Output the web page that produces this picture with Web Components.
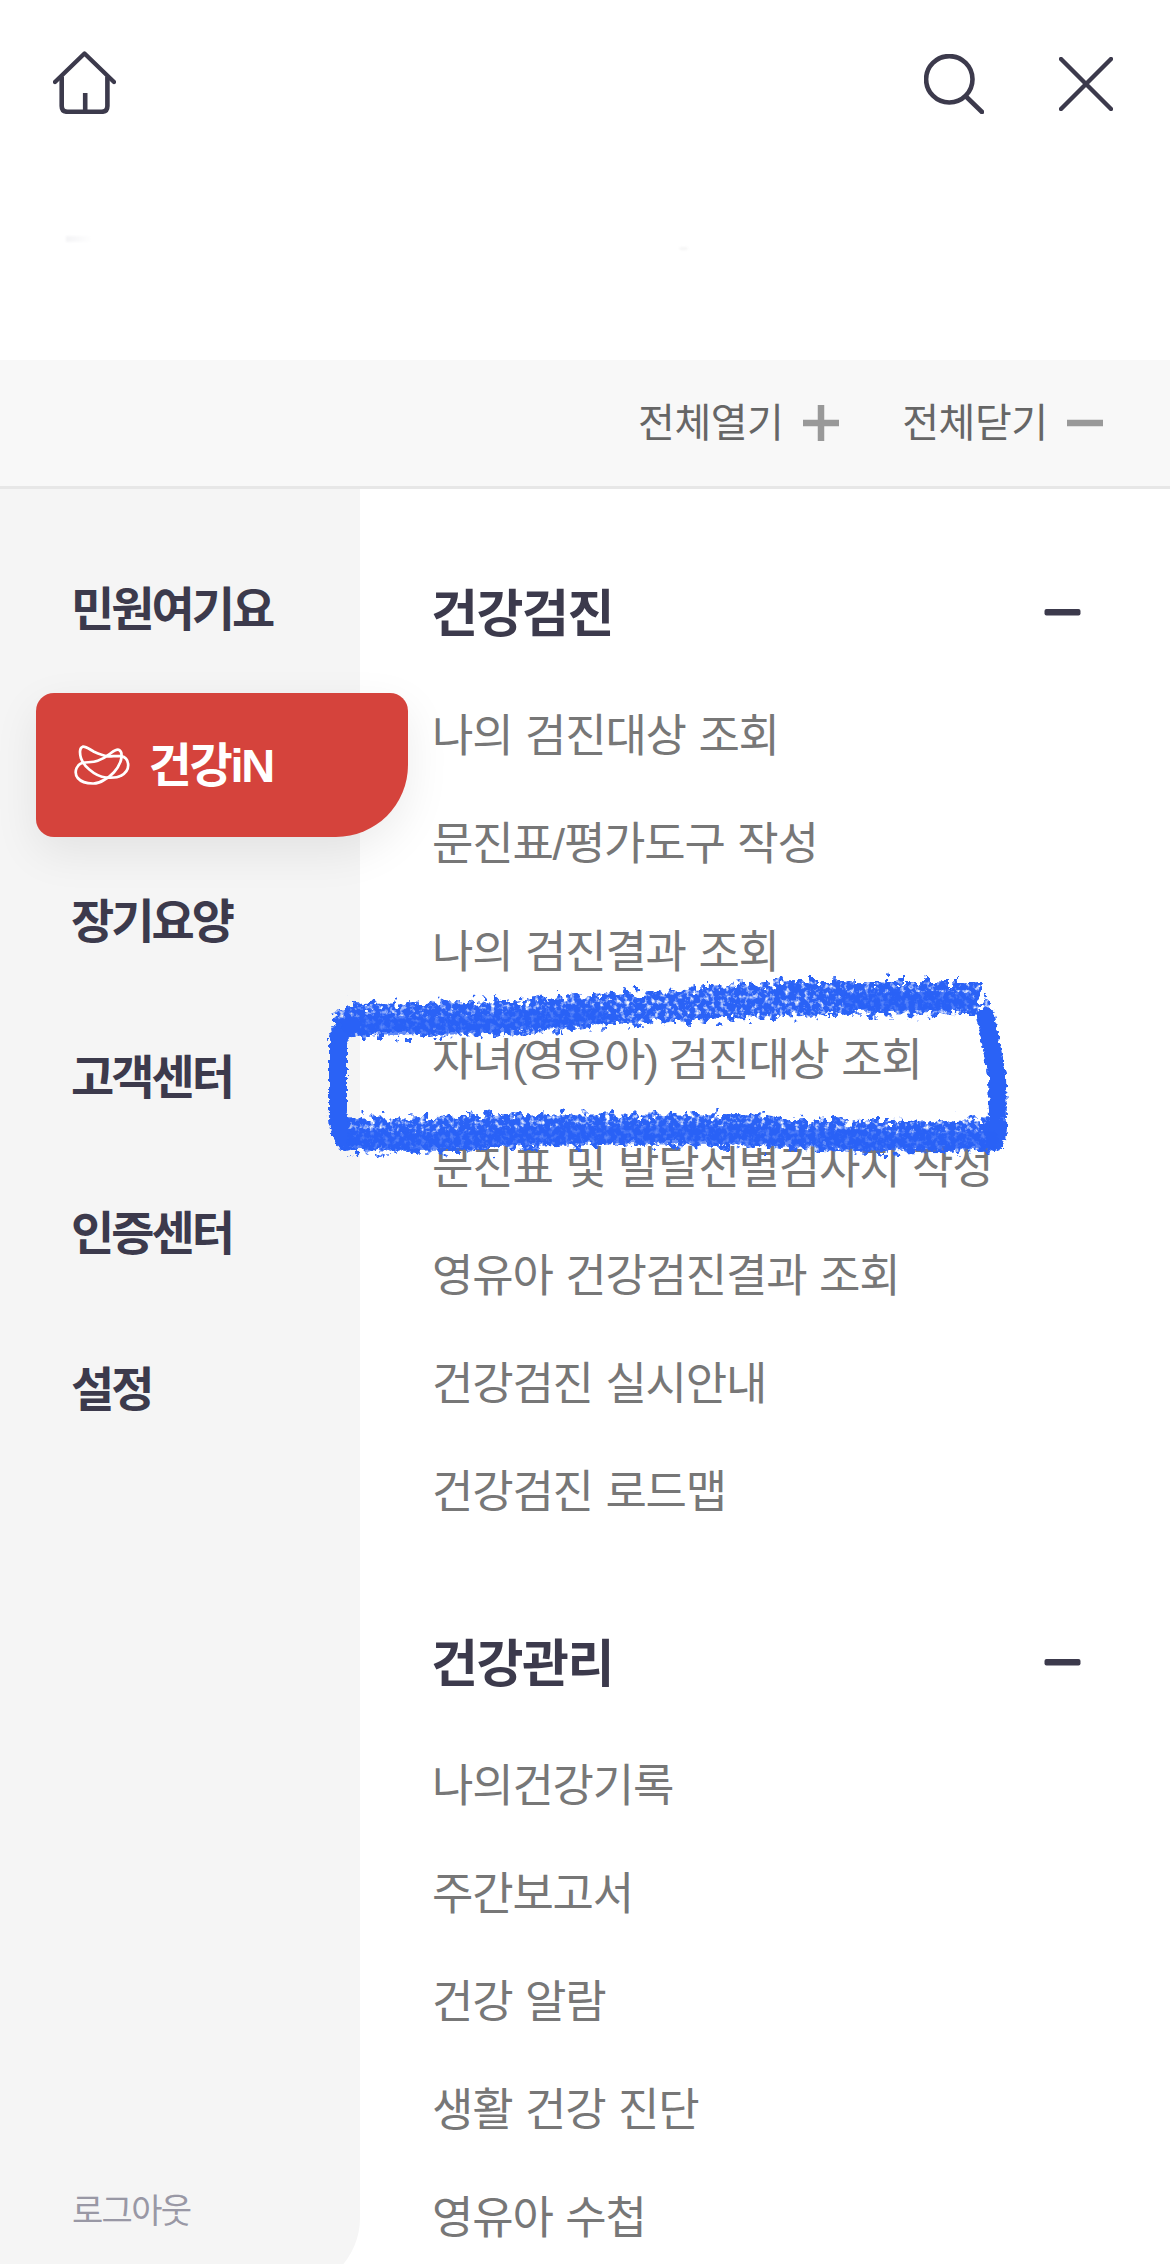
<!DOCTYPE html>
<html lang="ko">
<head>
<meta charset="utf-8">
<title>전체메뉴</title>
<style>
html,body{margin:0;padding:0;background:#fff}
body{width:1170px;height:2264px;overflow:hidden;font-family:"Liberation Sans","Noto Sans CJK KR",sans-serif;color:#3c3a4c}
</style>
</head>
<body>
<menu-app></menu-app>
<script>
class TopBar extends HTMLElement{
  constructor(){super();this.attachShadow({mode:'open'}).innerHTML=`
<style>
:host{display:flex;height:360px;box-sizing:border-box;padding:51px 57px 0 53px;align-items:flex-start;justify-content:space-between;position:relative}
svg{display:block;fill:none;stroke:#3c3a4c}
.right{display:flex;gap:75px;padding-top:3px;align-items:flex-start}
.x{margin-top:3px}
i{position:absolute;filter:blur(1px)}
.a{left:66px;top:236px;width:26px;height:6px;background:linear-gradient(90deg,#f4f4f6,#fff)}
.b{left:679px;top:247px;width:9px;height:3px;background:#f5f5f5;border-radius:50%}
</style>
<svg width="63" height="63" viewBox="0 0 63 63"><path d="M2 31 31.5 2.500 61 31" stroke-width="4.400" stroke-linecap="round" stroke-linejoin="round"/><path d="M8.700 25.500V55q0 5.800 6 5.800h33.700q6 0 6-5.800V25.500M32.200 60.500V42" stroke-width="4.600"/></svg>
<div class="right">
<svg width="60" height="60" viewBox="0 0 60 60"><circle cx="25.300" cy="25.300" r="23.200" stroke-width="4.600"/><path d="M42 42.500 58 58" stroke-width="4.600" stroke-linecap="round"/></svg>
<svg class="x" width="54" height="54" viewBox="0 0 54 54"><path d="M2 2 52 52M52 2 2 52" stroke-width="4.400" stroke-linecap="round"/></svg>
</div><i class="a"></i><i class="b"></i>`}
}
customElements.define('top-bar',TopBar);

class ToggleAll extends HTMLElement{
  connectedCallback(){
    const plus=this.getAttribute('icon')==='plus';
    this.attachShadow({mode:'open'}).innerHTML=`
<style>
:host{display:flex;align-items:center;font-size:40px;line-height:60px;letter-spacing:-.500px;color:#666}
svg{display:block;margin-left:18.500px}
</style>
<slot></slot><svg width="38" height="38" viewBox="0 0 38 38"><path d="M1 19H37${plus?'M19 1V37':''}" stroke="#999" stroke-width="6.500"/></svg>`}
}
customElements.define('toggle-all',ToggleAll);

class ToolBar extends HTMLElement{
  constructor(){super();this.attachShadow({mode:'open'}).innerHTML=`
<style>:host{display:flex;justify-content:flex-end;align-items:center;gap:62.500px;height:129px;box-sizing:border-box;padding-right:66px;background:#f8f8f8;border-bottom:3px solid #e7e7e7}</style>
<toggle-all icon="plus">전체열기</toggle-all><toggle-all icon="minus">전체닫기</toggle-all>`}
}
customElements.define('tool-bar',ToolBar);

class NavItem extends HTMLElement{
  connectedCallback(){
    const on=this.hasAttribute('active');
    this.attachShadow({mode:'open'}).innerHTML=`
<style>
:host{display:flex;align-items:center;height:144px;width:372px;box-sizing:border-box;padding-left:35px;font-size:47px;line-height:70px;font-weight:700;letter-spacing:-3px;white-space:nowrap}
:host([active]){letter-spacing:-2.300px;background:#d5433c;color:#fff;border-radius:18px 18px 72px 18px;box-shadow:0 15px 45px rgba(0,0,0,.08)}
span{padding-top:2px}
svg{display:block;margin:0 18.500px 0 3px}
</style>
${on?`<svg width="56" height="44" viewBox="0 0 56 44" fill="none" stroke="#fff" stroke-width="2.700"><path d="M8.700 3.700C5.500 4.500 5.500 10 7 15.300C9 20.500 11.500 23.500 15.300 26.500C20.500 31 26 34 32 34.500C38 35 43 35 47 32.700C52 30 54.300 26.500 54.200 22C54 17 51.500 14 47 13.200C42.500 12.600 38 13.600 33.700 13.300C28.500 12.500 24 10.500 20 8.700C15 6 12 3.200 8.700 3.700Z"/><path d="M44.700 6.800C47.800 8 48 12.500 47 17C45.500 22 43.500 25.500 40 29.200C36.500 33 34 35 30 37C26 39.500 22.500 40.700 18.700 40.500C12.500 40.500 7 38.800 3.700 35C1.500 32 1.200 28.500 2.500 25.300C3.800 22.300 6 20.300 8.700 19.800C14 19 19 19.500 23.700 17.700C28.500 16.200 32 14 35.300 11.300C38.500 9 41.500 6 44.700 6.800Z"/></svg>`:''}<span><slot></slot></span>`}
}
customElements.define('nav-item',NavItem);

class SideNav extends HTMLElement{
  constructor(){super();this.attachShadow({mode:'open'}).innerHTML=`
<style>
:host{display:flex;flex-direction:column;flex:none;width:360px;height:1801px;box-sizing:border-box;padding:48px 0 0 36px;gap:12px;background:#f5f5f5;border-bottom-right-radius:72px}
.out{margin-top:auto;margin-bottom:54px;padding-left:36px;font-size:34px;line-height:50px;letter-spacing:-1.700px;color:#9998a5}
</style>
<nav-item>민원여기요</nav-item><nav-item active>건강iN</nav-item><nav-item>장기요양</nav-item><nav-item>고객센터</nav-item><nav-item>인증센터</nav-item><nav-item>설정</nav-item>
<div class="out">로그아웃</div>`}
}
customElements.define('side-nav',SideNav);

class MenuGroup extends HTMLElement{
  connectedCallback(){
    const items=this.getAttribute('items').split('|');
    this.attachShadow({mode:'open'}).innerHTML=`
<style>
:host{display:block}
h2{display:flex;align-items:center;justify-content:space-between;height:138px;margin:0 0 0 -1px;font-size:51px;line-height:76px;font-weight:700;letter-spacing:-1.400px}
h2 span{padding-top:4px}
h2 svg{display:block}
ul{list-style:none;margin:0;padding:0}
li{height:108px;box-sizing:border-box;padding-top:1px;line-height:108px;font-size:45px;letter-spacing:-1.200px;word-spacing:1.300px;color:#777;white-space:nowrap}
li b{font-weight:400;letter-spacing:-3.900px}
</style>
<h2><span>${this.getAttribute('heading')}</span><svg width="37" height="8" viewBox="0 0 37 8"><rect x=".5" y="0" width="36" height="6.500" rx="2" fill="#3c3a4c"/></svg></h2>
<ul>${items.map(t=>`<li>${t.replace(/[()]/g,'<b>$&</b>')}</li>`).join('')}</ul>`}
}
customElements.define('menu-group',MenuGroup);

class MarkerBox extends HTMLElement{
  constructor(){super();this.attachShadow({mode:'open'}).innerHTML=`
<style>:host{display:block;position:absolute;left:310px;top:960px;pointer-events:none}svg{display:block}</style>
<svg width="720" height="220" viewBox="310 960 720 220">
<defs>
<filter id="r" filterUnits="userSpaceOnUse" x="310" y="960" width="720" height="220" color-interpolation-filters="sRGB">
<feTurbulence type="fractalNoise" baseFrequency=".13" numOctaves="3" seed="4" result="n"/>
<feDisplacementMap in="SourceGraphic" in2="n" scale="24" xChannelSelector="R" yChannelSelector="G" result="d"/>
<feTurbulence type="fractalNoise" baseFrequency=".2" numOctaves="3" seed="9"/>
<feColorMatrix values="0 0 0 0 0  0 0 0 0 0  0 0 0 0 0  0 0 0 3 -.450"/>
<feComposite in="d" operator="in"/>
<feGaussianBlur stdDeviation=".7"/>
</filter>
<filter id="e" filterUnits="userSpaceOnUse" x="310" y="960" width="720" height="220" color-interpolation-filters="sRGB">
<feTurbulence type="fractalNoise" baseFrequency=".25" numOctaves="2" seed="2" result="n"/>
<feDisplacementMap in="SourceGraphic" in2="n" scale="7" xChannelSelector="R" yChannelSelector="G"/>
<feGaussianBlur stdDeviation=".5"/>
</filter>
</defs>
<g fill="#2a62f6" filter="url(#r)"><path d="M334 1017L350 1004Q450 1003 520 1000Q600 996 670 990Q750 983 800 981L978 981L986 1014Q900 1014 830 1015Q700 1019 600 1027Q500 1035 420 1036L350 1036L334 1040Z"/><path d="M334 1117Q420 1119 500 1114Q600 1115 750 1114Q800 1121 890 1121L1001 1119L1001 1149Q970 1153 880 1152Q800 1147 670 1145Q560 1144 480 1150Q420 1153 350 1151L334 1142Z"/></g>
<g fill="none" stroke="#2a62f6" stroke-linecap="round" stroke-linejoin="round" filter="url(#e)"><path stroke-width="18" d="M352 1026Q338 1030 338 1045V1110Q337 1133 346 1141M986 1016Q992 1050 997 1075L998 1120Q999 1136 994 1142"/><path stroke-width="18" d="M350 1025Q470 1028 600 1015M356 1139Q430 1144 500 1137Q620 1132 760 1136Q880 1142 990 1140M850 1001L966 1001" opacity=".75"/></g>
</svg>`}
}
customElements.define('marker-box',MarkerBox);

class MenuApp extends HTMLElement{
  constructor(){super();this.attachShadow({mode:'open'}).innerHTML=`
<style>
:host{display:block;position:relative;width:1170px;height:2264px;overflow:hidden;background:#fff}
.body{display:flex;align-items:flex-start}
main{flex:1;display:flex;flex-direction:column;gap:48px;padding:55px 89px 0 72px;min-width:0}
</style>
<top-bar></top-bar><tool-bar></tool-bar>
<div class="body"><side-nav></side-nav>
<main>
<menu-group heading="건강검진" items="나의 검진대상 조회|문진표/평가도구 작성|나의 검진결과 조회|자녀(영유아) 검진대상 조회|문진표 및 발달선별검사지 작성|영유아 건강검진결과 조회|건강검진 실시안내|건강검진 로드맵"></menu-group>
<menu-group heading="건강관리" items="나의건강기록|주간보고서|건강 알람|생활 건강 진단|영유아 수첩"></menu-group>
</main></div>
<marker-box></marker-box>`}
}
customElements.define('menu-app',MenuApp);
</script>
</body>
</html>
